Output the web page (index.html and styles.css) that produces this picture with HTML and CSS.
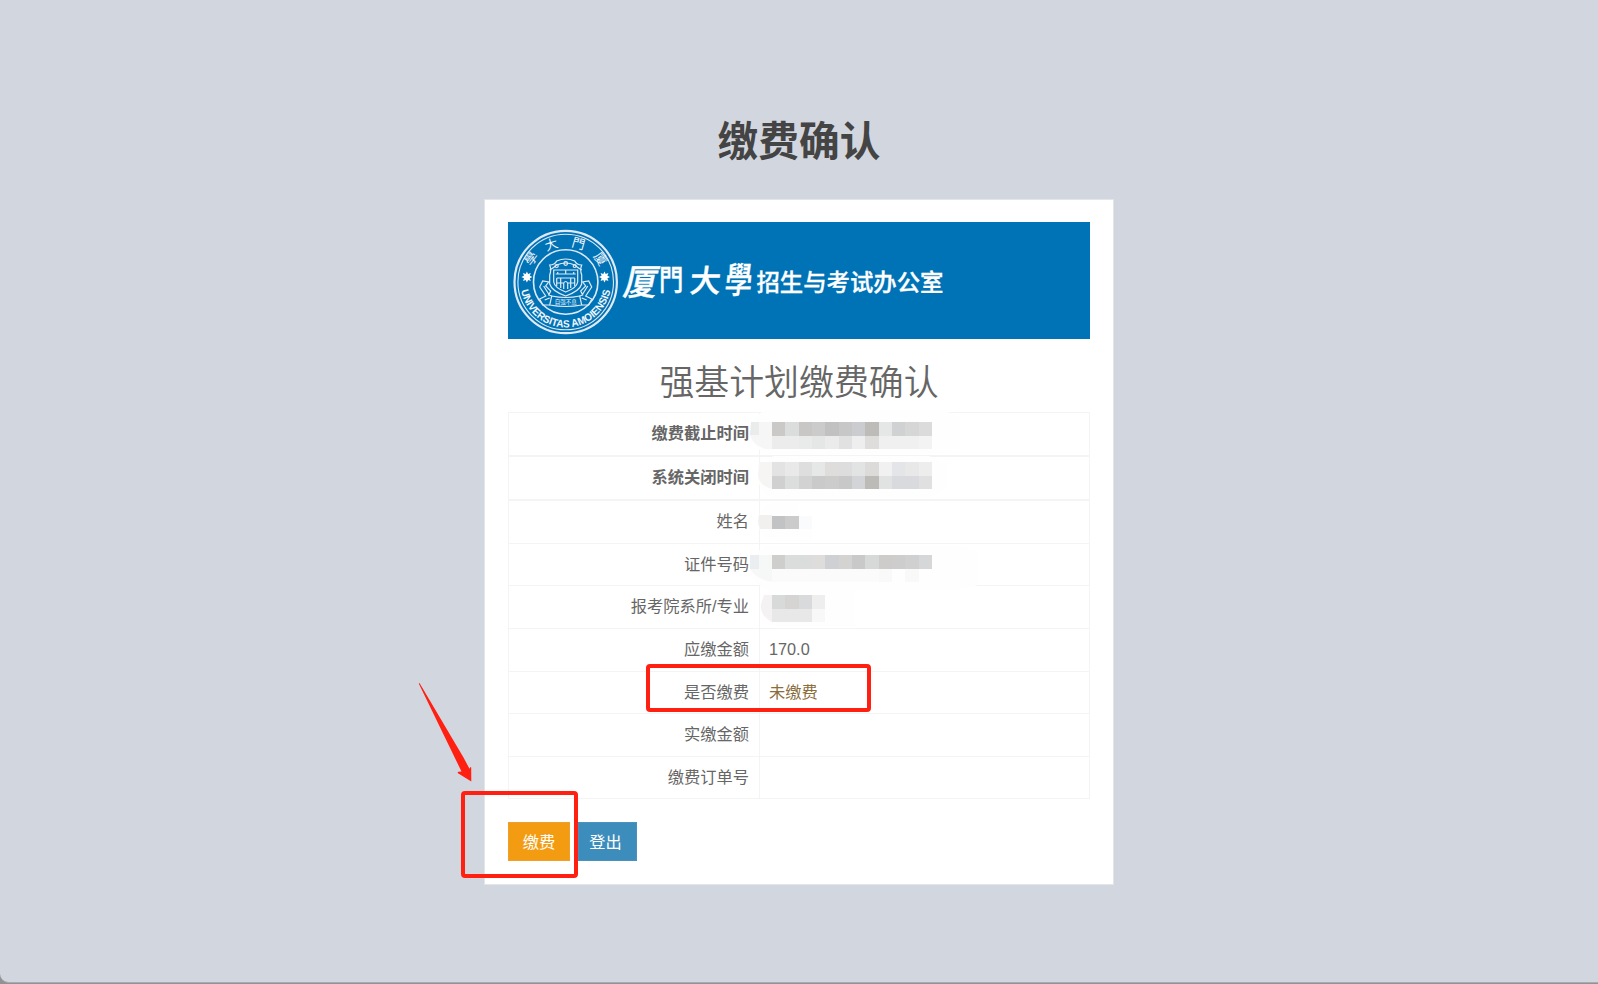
FILE: index.html
```
<!DOCTYPE html>
<html lang="zh-CN">
<head>
    <meta charset="UTF-8">
    <title>缴费确认</title>
    <link rel="stylesheet" href="styles.css">
</head>
<body>
    <div class="page">
        <h1 class="page-title">缴费确认</h1>

        <div class="card">
            <svg class="banner" viewBox="0 0 582 117" width="582" height="117">
                <!-- 校徽 -->
                <g class="seal" transform="translate(57.7 60)">
                    <circle r="51.2" stroke-width="2.2"/>
                    <circle r="47.8" stroke-width="1.1"/>
                    <circle r="32.2" stroke-width="1.6"/>
                    <path id="arc-bottom" class="guide" d="M-43.2 -14A45.4 45.4 0 1 0 43.2 -14"/>
                    <text class="seal-cn" transform="translate(-31 -20.5) rotate(-52)">學</text>
                    <text class="seal-cn" transform="translate(-13 -33) rotate(-18)">大</text>
                    <text class="seal-cn" transform="translate(11.5 -34) rotate(16)">門</text>
                    <text class="seal-cn" transform="translate(31 -20.5) rotate(54)">廈</text>
                    <text class="seal-en"><textPath href="#arc-bottom" startOffset="50%" textLength="125" lengthAdjust="spacingAndGlyphs">UNIVERSITAS AMOIENSIS</textPath></text>
                    <path class="star" d="M-38.8-10.5l1.2 2.6 2.7-1-1 2.7 2.6 1.2-2.6 1.2 1 2.7-2.7-1-1.2 2.6-1.2-2.6-2.7 1 1-2.7-2.6-1.2 2.6-1.2-1-2.7 2.7 1z"/>
                    <path class="star" d="M38.8-10.5l1.2 2.6 2.7-1-1 2.7 2.6 1.2-2.6 1.2 1 2.7-2.7-1-1.2 2.6-1.2-2.6-2.7 1 1-2.7-2.6-1.2 2.6-1.2-1-2.7 2.7 1z"/>
                    <path d="M-16-17q5 0 7-4q9-4 18 0q2 4 7 4q-2 5 0 10v9q-2 7-16 12q-14-5-16-12v-9q2-5 0-10z"/>
                    <path d="M-12-12h24v12q-1 6-12 10q-11-4-12-10zM-16-12q5-3 7-5q9-4 18 0q2 2 7 5"/>
                    <path d="M-10-8H10M-8-10V-8M0-12V-8M8-10V-8M-9-4H9M-9-4V4M9-4V4M-5-4V6M5-4V6M-2 7V1q2-3 4 0V7M-9 1H-2M2 1H9"/>
                    <circle cx="-9" cy="-16" r="1.5"/><circle cx="0" cy="-18.5" r="1.8"/><circle cx="9" cy="-16" r="1.5"/>
                    <path d="M-14 14q14 3 28 0l2 9q-16 3-32 0z"/>
                    <path d="M-16 23h-7l-3-6 6-3-6-9 3-6 6 1-3 4 5 5-2 4 3 1M16 23h7l3-6-6-3 6-9-3-6-6 1 3 4-5 5 2 4-3 1M-22 4l5 8M22 4l-5 8M-21 18l5-2M21 18l-5-2"/>
                    <text class="ribbon-text" y="21.5">自强不息</text>
                </g>

                <g class="school">
                    <text transform="translate(114 73) skewX(-12) scale(.94 1)" font-size="36">厦</text>
                    <text transform="translate(151 69) scale(.84 1)" font-size="29">門</text>
                    <text transform="translate(181 70) skewX(-5)" font-size="31">大</text>
                    <text transform="translate(216 71) skewX(-5) scale(.76 1)" font-size="36">學</text>
                </g>
                <text class="office" x="248.5" y="69" textLength="187">招生与考试办公室</text>
            </svg>

            <h2 class="form-title">强基计划缴费确认</h2>

            <table class="info">
                <tr class="head"><th>缴费截止时间</th><td></td></tr>
                <tr class="head"><th>系统关闭时间</th><td></td></tr>
                <tr class="tall"><th>姓名</th><td></td></tr>
                <tr><th>证件号码</th><td></td></tr>
                <tr class="tall"><th>报考院系所/专业</th><td></td></tr>
                <tr class="tall"><th>应缴金额</th><td>170.0</td></tr>
                <tr><th>是否缴费</th><td class="unpaid">未缴费</td></tr>
                <tr class="tall"><th>实缴金额</th><td></td></tr>
                <tr><th>缴费订单号</th><td></td></tr>
            </table>

            <div class="actions">
                <button class="btn btn-pay">缴费</button>
                <button class="btn btn-logout">登出</button>
            </div>
        </div>
    </div>

    <!-- 马赛克 -->
    <svg class="mosaic" viewBox="740 400 240 240" width="240" height="240" shape-rendering="crispEdges">
        <g fill="#fefefe" shape-rendering="auto">
            <path d="M770 409h170l20 8v30l-20 7H770q-20-5-20-22t20-23z"/>
            <path d="M774 456h155l18 8v25l-18 9H774q-16-6-16-21t16-21z"/>
            <path d="M772 502h27v14h13v26h-40q-14-8-14-20t14-20z"/>
            <path d="M768 545h190l20 6v34l-20 5H768q-18-8-18-22t18-23z"/>
            <path d="M775 588h80v38h-80q-14-8-14-19t14-19z"/>
        </g>
        <g shape-rendering="auto">
            <path fill="#e9ecea" d="M751 422h8v13h-9z"/>
            <path fill="#f6f6f6" d="M759 422h13v27h-6q-14-4-16-14h9z"/>
            <path fill="#f6f5f4" d="M759 462h13v27q-12-3-14-13z"/>
            <path fill="#f1f0ef" d="M759 515h13v14h-12q-3-6-1-14z"/>
            <path fill="#ebeef0" d="M750 555h9v14h-9z"/>
            <path fill="#f6f7f7" d="M759 555h13v27q-16-3-22-13h9z"/>
            <path fill="#f4f2f2" d="M764 595h8v27q-13-7-11-18z"/>
        </g>
        <path fill="#cbc9c7" d="M772 422h13v14h-13z"/><path fill="#dadddb" d="M785 422h14v14h-14z"/><path fill="#c8c7c5" d="M799 422h13v14h-13z"/><path fill="#cbcbcb" d="M812 422h13v14h-13z"/><path fill="#c1c1c1" d="M825 422h14v14h-14z"/><path fill="#c7c7c7" d="M839 422h13v14h-13z"/><path fill="#cacccf" d="M852 422h13v14h-13z"/><path fill="#bebcb9" d="M865 422h14v14h-14z"/><path fill="#e4e7e5" d="M879 422h13v14h-13z"/><path fill="#d0d1d3" d="M892 422h13v14h-13z"/><path fill="#d6d6d6" d="M905 422h14v14h-14z"/><path fill="#dbdbdb" d="M919 422h13v14h-13z"/>
        <path fill="#ececec" d="M772 436h27v13h-27z"/><path fill="#e8ebe9" d="M799 436h13v13h-13z"/><path fill="#e4e7e5" d="M812 436h13v13h-13z"/><path fill="#ebebeb" d="M825 436h14v13h-14z"/><path fill="#e1e1e1" d="M839 436h13v13h-13z"/><path fill="#eeeeee" d="M852 436h13v13h-13z"/><path fill="#dfdddb" d="M865 436h14v13h-14z"/><path fill="#f0f0f0" d="M879 436h40v13h-40z"/><path fill="#f3f3f3" d="M919 436h13v13h-13z"/>

        <path fill="#e3e3e3" d="M772 462h13v14h-13z"/><path fill="#e9e9e9" d="M785 462h14v14h-14z"/><path fill="#dedede" d="M799 462h13v14h-13z"/><path fill="#e5e8e6" d="M812 462h13v14h-13z"/><path fill="#dedddb" d="M825 462h14v14h-14z"/><path fill="#dddddd" d="M839 462h13v14h-13z"/><path fill="#e1e4e2" d="M852 462h13v14h-13z"/><path fill="#dddbd9" d="M865 462h14v14h-14z"/><path fill="#f1f1f1" d="M879 462h13v14h-13z"/><path fill="#e4e5e8" d="M892 462h13v14h-13z"/><path fill="#e8e8e8" d="M905 462h14v14h-14z"/><path fill="#ededed" d="M919 462h13v14h-13z"/>
        <path fill="#d0d0d0" d="M772 476h13v13h-13z"/><path fill="#dbdedc" d="M785 476h14v13h-14z"/><path fill="#d2d2d2" d="M799 476h13v13h-13z"/><path fill="#cacaca" d="M812 476h13v13h-13z"/><path fill="#cccccc" d="M825 476h14v13h-14z"/><path fill="#c8c8c8" d="M839 476h13v13h-13z"/><path fill="#d2d4d7" d="M852 476h13v13h-13z"/><path fill="#bdbbb8" d="M865 476h14v13h-14z"/><path fill="#e0e3e1" d="M879 476h13v13h-13z"/><path fill="#d8dadd" d="M892 476h27v13h-27z"/><path fill="#e0e0e0" d="M919 476h13v13h-13z"/>

        <path fill="#c2c3c5" d="M772 516h13v13h-13z"/><path fill="#cbcbcb" d="M785 516h14v13h-14z"/><path fill="#fafbfd" d="M799 516h13v13h-13z"/>

        <path fill="#cececc" d="M772 555h13v14h-13z"/><path fill="#dadddb" d="M785 555h27v14h-27z"/><path fill="#dfdddb" d="M812 555h13v14h-13z"/><path fill="#ced0d3" d="M825 555h14v14h-14z"/><path fill="#d5d3d2" d="M839 555h13v14h-13z"/><path fill="#c9c9c9" d="M852 555h13v14h-13z"/><path fill="#d7d8d8" d="M865 555h14v14h-14z"/><path fill="#cdccca" d="M879 555h13v14h-13z"/><path fill="#cdcdcd" d="M892 555h13v14h-13z"/><path fill="#d0d0d0" d="M905 555h14v14h-14z"/><path fill="#d6d7d9" d="M919 555h13v14h-13z"/>
        <path fill="#fbfbfb" d="M772 569h107v13H772z"/><path fill="#f9f9f9" d="M879 569h13v13h-13zM905 569h14v13h-14z"/>

        <path fill="#d7dad8" d="M772 595h13v14h-13z"/><path fill="#d6d4d2" d="M785 595h14v14h-14z"/><path fill="#d9dadc" d="M799 595h13v14h-13z"/><path fill="#eeeeee" d="M812 595h13v14h-13z"/>
        <path fill="#e8e8e8" d="M772 609h40v13h-40z"/><path fill="#f8f8f8" d="M812 609h13v13h-13z"/>
    </svg>

    <!-- 标注 -->
    <div class="mark mark-status"></div>
    <div class="mark mark-pay"></div>
    <svg class="arrow" viewBox="0 0 56 102" width="56" height="102">
        <path d="M1.5 1Q.5 1 1 2L43.5 89.5 40.5 89.8Q39 90.5 40 91.2L53.3 99.5 53.2 85.5Q52.5 84 51.5 86.8L45.5 75.5Z"/>
    </svg>
</body>
</html>
```
FILE: styles.css
```
* {
  box-sizing: border-box;
}

body {
  margin: 0;
  background: #929296;
  font-family: "Liberation Sans", "Noto Sans CJK SC", sans-serif;
  font-size: 16.25px;
  color: #666;
}

.page {
  height: 983px;
  padding-top: 115px;
  background: #d2d6df;
  border-bottom: 1px solid #a8abb3;
  border-bottom-left-radius: 9px;
}

.page-title {
  margin: 0;
  height: 84px;
  line-height: 54px;
  font-size: 40.7px;
  font-weight: bold;
  color: #444;
  text-align: center;
}

.card {
  width: 630px;
  height: 686px;
  margin: 0 auto;
  padding: 22px 23px;
  background: #fff;
  border: 1px solid #e3e5eb;
}

.banner {
  display: block;
  background: #0073b7;
}

/* 校徽 */
.seal {
  fill: none;
  stroke: #dfeaf6;
  stroke-width: 1.2;
}

.seal text {
  fill: #f3f7fc;
  stroke: none;
  text-anchor: middle;
}

.guide {
  stroke: none;
}

.star {
  fill: #fff;
  stroke: none;
}

.seal-cn {
  font: 13px "Noto Sans CJK TC", sans-serif;
}

.seal-en {
  font: bold 10.5px "Liberation Sans", sans-serif;
}

.ribbon-text {
  font: 5.5px "Noto Sans CJK SC", sans-serif;
}

.school {
  font-family: "Noto Sans CJK TC", sans-serif;
  font-weight: 500;
  fill: #fff;
  stroke: #fff;
  stroke-width: 0.4;
}

.office {
  font-family: "Noto Sans CJK SC", sans-serif;
  font-size: 23.4px;
  font-weight: 500;
  fill: #fff;
  stroke: #fff;
  stroke-width: 0.3;
}

.form-title {
  margin: 0;
  height: 73px;
  padding-top: 21px;
  line-height: 46px;
  font-size: 34.9px;
  font-weight: 350;
  text-align: center;
}

.info {
  width: 582px;
  table-layout: fixed;
  border-collapse: separate;
  border-spacing: 0;
  border: 1px solid #f4f4f4;
  border-bottom: 0;
}

.info th,
.info td {
  height: 42px;
  padding: 0 9px 2px;
  border-bottom: 1px solid #f4f4f4;
  line-height: 24px;
  font-weight: normal;
}

.info th {
  width: 251px;
  padding-right: 10px;
  text-align: right;
  border-right: 1px solid #f4f4f4;
}

.info .head th,
.info .head td {
  height: 44px;
  border-bottom-width: 2px;
}

.info .head th {
  font-weight: bold;
}

.info .tall th {
  height: 43px;
}

.info .unpaid {
  color: #8a6d3b;
}

.actions {
  display: flex;
  gap: 8px;
  margin-top: 23px;
}

.btn {
  height: 39px;
  padding: 0 0 1px;
  border: 1px solid;
  font: inherit;
  color: #fff;
}

.btn-pay {
  width: 62px;
  background: #f39c12;
  border-color: #eda02f;
}

.btn-logout {
  width: 59px;
  padding-right: 4px;
  background: #3c8dbc;
  border-color: #4a92bd;
}

.mosaic {
  position: absolute;
  left: 740px;
  top: 400px;
}

/* 红框和箭头 */
.mark {
  position: absolute;
  border: 4px solid #ff2012;
  border-radius: 4px;
}

.mark-status {
  left: 646px;
  top: 664px;
  width: 225px;
  height: 48px;
}

.mark-pay {
  left: 461px;
  top: 791px;
  width: 117px;
  height: 87px;
}

.arrow {
  position: absolute;
  left: 418px;
  top: 682px;
  fill: #ff2012;
}
```
